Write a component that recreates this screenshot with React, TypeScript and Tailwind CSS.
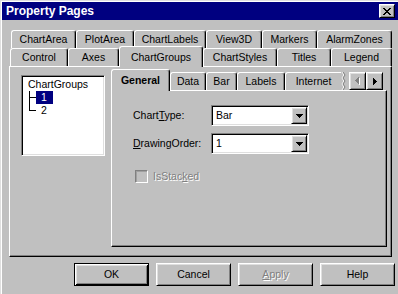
import React from "react";

type T = { label: string; w: string; selected?: boolean };

const row1: T[] = [
  { label: "ChartArea", w: "w-[65px]" },
  { label: "PlotArea", w: "w-[58px]" },
  { label: "ChartLabels", w: "w-[72px]" },
  { label: "View3D", w: "w-[56px]" },
  { label: "Markers", w: "w-[55px]" },
  { label: "AlarmZones", w: "w-[75px]" },
];

const row2: T[] = [
  { label: "Control", w: "w-[58px]" },
  { label: "Axes", w: "w-[51px]" },
  { label: "ChartGroups", w: "w-[84px]", selected: true },
  { label: "ChartStyles", w: "w-[74px]" },
  { label: "Titles", w: "w-[54px]" },
  { label: "Legend", w: "w-[61px]" },
];

const inner: T[] = [
  { label: "General", w: "w-[59px]", selected: true },
  { label: "Data", w: "w-[36px]" },
  { label: "Bar", w: "w-[31px]" },
  { label: "Labels", w: "w-[48px]" },
];

function Tab({ t, big }: { t: T; big?: boolean }) {
  const h = t.selected ? (big ? "h-[22px] -mb-px relative z-10 font-bold" : "h-[21px] -mb-px relative z-10") : "h-[18px]";
  return (
    <div
      className={`${t.w} ${h} shrink-0 flex items-center justify-center bg-[#c0c0c0] border-l border-t border-r border-l-white border-t-white border-r-black rounded-t-[3px] shadow-[inset_-1px_0_#808080]`}
    >
      {t.label}
    </div>
  );
}

const raised =
  "border border-t-white border-l-white border-r-black border-b-black shadow-[inset_1px_1px_#dfdfdf,inset_-1px_-1px_#808080] bg-[#c0c0c0]";
const sunken =
  "border border-t-[#808080] border-l-[#808080] border-b-white border-r-white shadow-[inset_1px_1px_#000,inset_-1px_-1px_#dfdfdf]";

function DownArrow() {
  return (
    <svg width="7" height="4" viewBox="0 0 7 4" shapeRendering="crispEdges">
      <path d="M0 0h7v1H0z M1 1h5v1H1z M2 2h3v1H2z M3 3h1v1H3z" fill="#000" />
    </svg>
  );
}

function Select({ value }: { value: string }) {
  return (
    <div className={`w-[98px] h-[21px] ${sunken} bg-white flex items-stretch p-px`}>
      <div className="flex-1 flex items-center pl-[3px]">{value}</div>
      <div className={`w-[16px] ${raised} flex items-center justify-center`}>
        <DownArrow />
      </div>
    </div>
  );
}

function Btn({ children, def }: { children: React.ReactNode; def?: boolean }) {
  const cls = def
    ? "border border-black shadow-[inset_1px_1px_#fff,inset_-1px_-1px_#000,inset_2px_2px_#dfdfdf,inset_-2px_-2px_#808080]"
    : raised;
  return (
    <div className={`w-[75px] h-[23px] ${cls} flex items-center justify-center bg-[#c0c0c0]`}>
      {children}
    </div>
  );
}

export default function App() {
  return (
    <div className="w-[398px] h-[294px] overflow-hidden bg-[#c0c0c0] border-l border-t border-[#dfdfdf] shadow-[inset_1px_1px_#fff] pl-px pt-px font-['Liberation_Sans',Arial,sans-serif] text-[10.5px] text-black leading-none">
      {/* Title bar */}
      <div className="w-[396px] h-[18px] bg-[#000080] flex items-center justify-between pl-[4px] pr-[3px]">
        <span className="text-white font-bold text-[12px]">Property Pages</span>
        <div className={`w-[16px] h-[14px] ${raised} flex items-center justify-center`}>
          <svg width="8" height="7" viewBox="0 0 8 7" shapeRendering="crispEdges">
            <path
              d="M0 0h2v1H0z M6 0h2v1H6z M1 1h2v1H1z M5 1h2v1H5z M2 2h4v1H2z M3 3h2v1H3z M2 4h4v1H2z M1 5h2v1H1z M5 5h2v1H5z M0 6h2v1H0z M6 6h2v1H6z"
              fill="#000"
            />
          </svg>
        </div>
      </div>

      {/* Outer tab control */}
      <div className="ml-[7px] mt-[10px] w-[383px]">
        <div className="flex pl-[2px] h-[18px]">
          {row1.map((t) => (
            <Tab key={t.label} t={t} />
          ))}
        </div>
        <div className="flex items-end pl-[1px] h-[18px]">
          {row2.map((t) => (
            <Tab key={t.label} t={t} />
          ))}
        </div>
        <div className="h-[191px] border-t border-l border-white border-r border-b border-r-black border-b-black shadow-[inset_-1px_-1px_#808080] flex items-start">
          {/* Tree */}
          <div className={`ml-[11px] mt-[8px] w-[84px] h-[81px] bg-white ${sunken} pt-[2px]`}>
            <div className="h-[13px] flex items-center pl-[6px]">ChartGroups</div>
            <div className="h-[13px] flex items-stretch pl-[7px]">
              <svg width="7" height="13" viewBox="0 0 7 13" shapeRendering="crispEdges">
                <path d="M0 0h1v13H0z M1 6h6v1H1z" fill="#000" />
              </svg>
              <div className="w-[17px] bg-[#000080] text-white flex items-center pl-[5px]">1</div>
            </div>
            <div className="h-[13px] flex items-stretch pl-[7px]">
              <svg width="7" height="13" viewBox="0 0 7 13" shapeRendering="crispEdges">
                <path d="M0 0h1v7H0z M1 6h6v1H1z" fill="#000" />
              </svg>
              <div className="flex items-center pl-[5px]">2</div>
            </div>
          </div>

          {/* Inner tab control */}
          <div className="ml-[6px] mt-[1px] w-[276px]">
            <div className="flex items-end h-[22px]">
              {inner.map((t) => (
                <Tab key={t.label} t={t} big />
              ))}
              <div className="w-[56px] h-[18px] shrink-0 flex items-center justify-center bg-[#c0c0c0] border-l border-t border-l-white border-t-white rounded-tl-[3px]">
                Internet
              </div>
              <svg width="8" height="18" viewBox="0 0 8 18" className="shrink-0">
                <polyline points="1,0 3,3 1,6 3,9 1,12 3,15 1,18" fill="none" stroke="#fff" strokeWidth="1" />
                <polyline points="2,0 4,3 2,6 4,9 2,12 4,15 2,18" fill="none" stroke="#808080" strokeWidth="1" />
              </svg>
              <div className={`w-[17px] h-[18px] ${raised} flex items-center justify-center shrink-0`}>
                <svg width="5" height="8" viewBox="0 0 5 8" shapeRendering="crispEdges">
                  <path d="M4 1h1v7H4z M3 2h1v5H3z M2 3h1v3H2z M1 4h1v1H1z" fill="#fff" />
                  <path d="M3 0h1v7H3z M2 1h1v5H2z M1 2h1v3H1z M0 3h1v1H0z" fill="#808080" />
                </svg>
              </div>
              <div className={`w-[17px] h-[18px] ${raised} flex items-center justify-center shrink-0`}>
                <svg width="4" height="7" viewBox="0 0 4 7" shapeRendering="crispEdges">
                  <path d="M0 0h1v7H0z M1 1h1v5H1z M2 2h1v3H2z M3 3h1v1H3z" fill="#000" />
                </svg>
              </div>
            </div>
            <div className="h-[157px] border-t border-l border-white border-r border-b border-r-black border-b-black shadow-[inset_-1px_-1px_#808080] pl-[21px] pt-[14px]">
              <div className="grid grid-cols-[78px_98px] gap-y-[7px] items-center">
                <div>
                  Chart<span className="underline">T</span>ype:
                </div>
                <Select value="Bar" />
                <div>
                  <span className="underline">D</span>rawingOrder:
                </div>
                <Select value="1" />
              </div>
              <div className="flex items-center mt-[16px] ml-[2px]">
                <div className="w-[13px] h-[13px] border border-t-[#808080] border-l-[#808080] border-b-white border-r-white shadow-[inset_1px_1px_#a0a0a0] bg-[#c0c0c0]" />
                <span className="ml-[5px] text-[#808080] [text-shadow:1px_1px_0_#fff]">
                  IsStac<span className="underline">k</span>ed
                </span>
              </div>
            </div>
          </div>
        </div>
      </div>

      {/* Buttons */}
      <div className="flex ml-[72px] mt-[6px] gap-[7px]">
        <Btn def>OK</Btn>
        <Btn>Cancel</Btn>
        <Btn>
          <span className="text-[#808080] [text-shadow:1px_1px_0_#fff]">
            <span className="underline">A</span>pply
          </span>
        </Btn>
        <Btn>Help</Btn>
      </div>
    </div>
  );
}
